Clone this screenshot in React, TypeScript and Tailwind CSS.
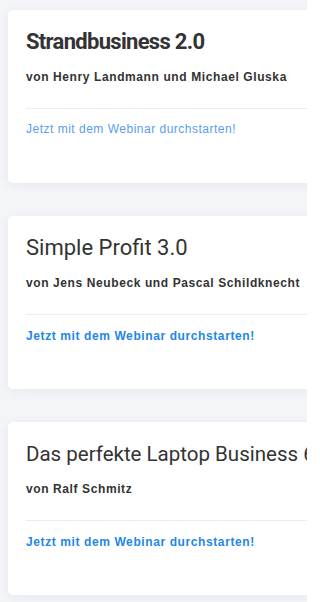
import React from 'react';

type Webinar = {
  title: string;
  authors: string;
  featured?: boolean;
  long?: boolean;
};

const webinars: Webinar[] = [
  { title: 'Strandbusiness 2.0', authors: 'von Henry Landmann und Michael Gluska', featured: true },
  { title: 'Simple Profit 3.0', authors: 'von Jens Neubeck und Pascal Schildknecht' },
  { title: 'Das perfekte Laptop Business 6.0', authors: 'von Ralf Schmitz', long: true },
];

function WebinarCard({ webinar }: { webinar: Webinar }) {
  let titleClass = "font-['Roboto',sans-serif] text-[22px] leading-[28px] font-normal text-[#333]";
  if (webinar.featured) {
    titleClass = "font-['Roboto',sans-serif] text-[22px] leading-[28px] font-bold tracking-[-0.7px] text-[#333]";
  } else if (webinar.long) {
    titleClass = "font-['Roboto',sans-serif] text-[20.5px] leading-[28px] font-normal text-[#333]";
  }

  return (
    <div className="w-[440px] h-[173px] shrink-0 bg-white rounded-[5px] shadow-[0_2px_12px_rgba(30,40,70,0.06)] pl-[18px] pt-[18px] whitespace-nowrap">
      <h2 className={titleClass}>{webinar.title}</h2>
      <p className="mt-[13px] font-['Liberation_Sans',Arial,sans-serif] text-[12px] leading-[16px] font-bold tracking-[0.6px] text-[#333]">
        {webinar.authors}
      </p>
      <div className="mt-[23px] h-px bg-[#ececef]" />
      {webinar.featured ? (
        <a className="block mt-[12px] font-['Liberation_Sans',Arial,sans-serif] text-[12px] leading-[16px] tracking-[0.5px] text-[#5a9cf0]">
          Jetzt mit dem Webinar durchstarten!
        </a>
      ) : (
        <a className="block mt-[13px] font-['Liberation_Sans',Arial,sans-serif] text-[12px] leading-[16px] font-bold tracking-[0.6px] text-[#1f87e5]">
          Jetzt mit dem Webinar durchstarten!
        </a>
      )}
    </div>
  );
}

export default function App() {
  return (
    <div className="w-[307px] h-[602px] overflow-hidden bg-[#f3f5f9] pl-[8px] pt-[10px]">
      <div className="flex flex-col gap-[33px]">
        {webinars.map(w => (
          <WebinarCard key={w.title} webinar={w} />
        ))}
      </div>
    </div>
  );
}
